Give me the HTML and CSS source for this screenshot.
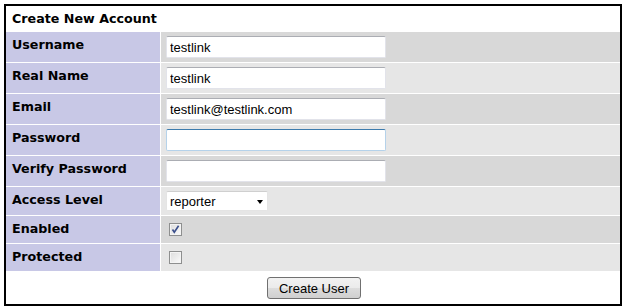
FILE: index.html
```html
<!DOCTYPE html>
<html>
<head>
<meta charset="utf-8">
<link rel="stylesheet" href="styles.css">
</head>
<body>
<div class="panel">
  <div class="title">Create New Account</div>
  <div class="form">
    <div class="label r30">Username</div>
    <div class="value dark"><input class="text" type="text" value="testlink"></div>
    <div class="label r30">Real Name</div>
    <div class="value light"><input class="text" type="text" value="testlink"></div>
    <div class="label r30">Email</div>
    <div class="value dark"><input class="text" type="text" value="testlink@testlink.com"></div>
    <div class="label r30">Password</div>
    <div class="value light"><input class="text focus" type="password" value=""></div>
    <div class="label r30">Verify Password</div>
    <div class="value dark"><input class="text" type="password" value=""></div>
    <div class="label">Access Level</div>
    <div class="value light"><span class="select-wrap"><select class="select"><option>reporter</option></select></span></div>
    <div class="label">Enabled</div>
    <div class="value dark check-cell"><span class="check"><svg width="11" height="11" viewBox="0 0 11 11"><path d="M2.5 5.5 L4.3 8.3 L8.6 1.8" fill="none" stroke="#3b4f8c" stroke-width="1.6"/></svg></span></div>
    <div class="label">Protected</div>
    <div class="value light check-cell"><span class="check"></span></div>
  </div>
  <div class="actions"><button class="btn" type="button">Create User</button></div>
</div>
</body>
</html>
```
FILE: styles.css
```css
html, body { margin: 0; padding: 0; background: #fff; }
body { padding: 4px; }
.panel {
  width: 614px;
  border: 2px solid #000;
  background: #fff;
  font-family: "DejaVu Sans", Verdana, sans-serif;
  color: #000;
}
.title {
  height: 26px;
  box-sizing: border-box;
  padding: 6px 0 0 6px;
  font-weight: bold;
  font-size: 12.7px;
  line-height: 14px;
}
.form {
  display: grid;
  grid-template-columns: 154px 459px;
  grid-template-rows: 30px 30px 30px 30px 30px 28px 27px 27px;
  gap: 1px;
  background: #fff;
}
.label {
  background: #c8c8e6;
  font-weight: bold;
  font-size: 12.7px;
  padding: 6px 0 0 6px;
  line-height: 14px;
}
.value { display: flex; align-items: center; padding-left: 5px; }
.dark { background: #d8d8d8; }
.light { background: #e6e6e6; }
.text {
  box-sizing: border-box;
  width: 220px;
  height: 22px;
  margin: 0;
  padding: 0 3px;
  border: 1px solid #e2e3ea;
  border-top-color: #abadb3;
  border-radius: 2px;
  background: #fff;
  font-family: "Liberation Sans", Arial, sans-serif;
  font-size: 13px;
  color: #000;
  outline: none;
}
.text.focus { border-color: #b5d2ea; border-top-color: #3d7bad; }
.select-wrap { position: relative; display: inline-block; }
.select {
  box-sizing: border-box;
  width: 102px;
  height: 20px;
  margin: 0;
  padding: 0 3px;
  -webkit-appearance: none;
  appearance: none;
  border: 1px solid #e4e4e4;
  border-top-color: #cfcfcf;
  border-radius: 2px;
  background: #fff;
  font-family: "Liberation Sans", Arial, sans-serif;
  font-size: 13px;
  color: #000;
}
.select-wrap::after {
  content: "";
  position: absolute;
  left: 91px;
  top: 9px;
  border-left: 3.5px solid transparent;
  border-right: 3.5px solid transparent;
  border-top: 4px solid #000;
}
.check-cell { padding-left: 8px; }
.check {
  box-sizing: border-box;
  display: inline-block;
  width: 13px;
  height: 13px;
  border: 1px solid #8e8f8f;
  background: linear-gradient(135deg, #dcdcdc, #fbfbfb);
  box-shadow: inset 0 0 0 1px #f4f4f4;
  position: relative;
}
.check svg { display: block; }
.actions {
  height: 33px;
  box-sizing: border-box;
  padding-top: 6px;
  display: flex;
  justify-content: center;
}
.btn {
  box-sizing: border-box;
  width: 94px;
  height: 22px;
  margin: 0 0 0 2px;
  padding: 0;
  border: 1px solid #707070;
  border-radius: 3px;
  background: linear-gradient(#f2f2f2 0%, #ebebeb 50%, #dddddd 51%, #cfcfcf 100%);
  font-family: "Liberation Sans", Arial, sans-serif;
  font-size: 13px;
  color: #000;
}
```
